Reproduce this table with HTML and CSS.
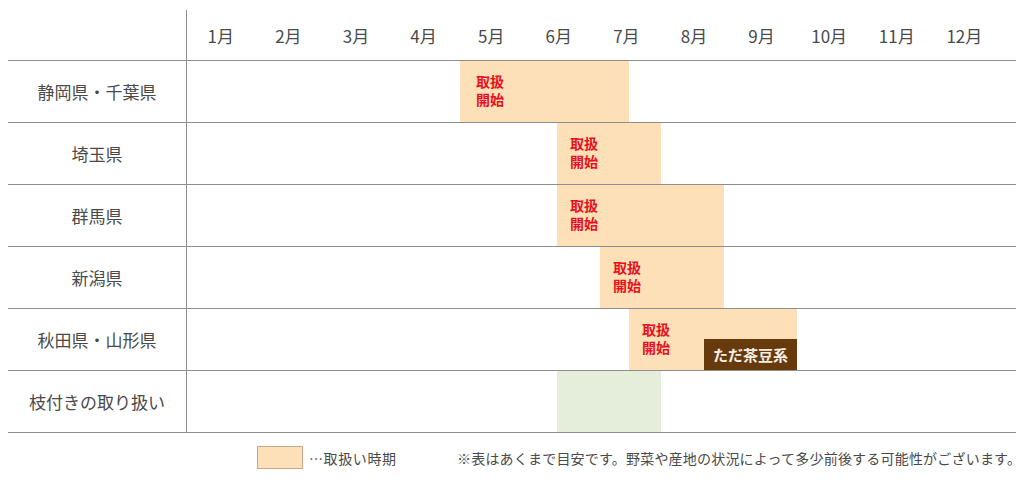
FILE: index.html
```html
<!DOCTYPE html>
<html lang="ja">
<head>
<meta charset="utf-8">
<link rel="stylesheet" href="styles.css">
</head>
<body>
<div class="chart">
  <div class="row head">
    <div class="label"></div>
    <div class="months">
      <span>1月</span><span>2月</span><span>3月</span><span>4月</span><span>5月</span><span>6月</span>
      <span>7月</span><span>8月</span><span>9月</span><span>10月</span><span>11月</span><span>12月</span>
    </div>
  </div>
  <div class="row">
    <div class="label">静岡県・千葉県</div>
    <div class="track"><div class="bar first" style="margin-left:273px;width:169px">取扱<br>開始</div></div>
  </div>
  <div class="row">
    <div class="label">埼玉県</div>
    <div class="track"><div class="bar" style="margin-left:370px;width:104px">取扱<br>開始</div></div>
  </div>
  <div class="row">
    <div class="label">群馬県</div>
    <div class="track"><div class="bar" style="margin-left:370px;width:167px">取扱<br>開始</div></div>
  </div>
  <div class="row">
    <div class="label">新潟県</div>
    <div class="track"><div class="bar" style="margin-left:413px;width:124px">取扱<br>開始</div></div>
  </div>
  <div class="row">
    <div class="label">秋田県・山形県</div>
    <div class="track"><div class="bar" style="margin-left:442px;width:168px">取扱<br>開始<span class="badge">ただ茶豆系</span></div></div>
  </div>
  <div class="row last">
    <div class="label">枝付きの取り扱い</div>
    <div class="track"><div class="bar green" style="margin-left:370px;width:104px"></div></div>
  </div>
</div>
<div class="legend">
  <span class="swatch"></span>
  <span class="legend-text">…取扱い時期</span>
  <span class="note">※表はあくまで目安です。野菜や産地の状況によって多少前後する可能性がございます。</span>
</div>
</body>
</html>
```
FILE: styles.css
```css
html, body {
  margin: 0;
  padding: 0;
  background: #ffffff;
}
body {
  width: 1024px;
  height: 486px;
  overflow: hidden;
  font-family: "Noto Sans CJK JP", "Noto Sans", sans-serif;
  font-weight: 400;
  color: #4a4a4a;
}
.chart {
  margin-left: 8px;
  width: 1008px;
  padding-top: 10px;
}
.row {
  display: flex;
  height: 61px;
  border-top: 1px solid #8e8e8e;
}
.row.head {
  height: 50px;
  border-top: none;
}
.row.last {
  border-bottom: 1px solid #8e8e8e;
}
.label {
  width: 178px;
  flex: none;
  border-right: 1px solid #8e8e8e;
  display: flex;
  align-items: center;
  justify-content: center;
  font-size: 17px;
  white-space: nowrap;
}
.months {
  display: grid;
  grid-template-columns: repeat(12, 67.6px);
  align-items: center;
  font-size: 17px;
}
.months span {
  text-align: center;
}
.track {
  flex: 1;
  display: flex;
}
.bar {
  position: relative;
  flex: none;
  height: 61px;
  box-sizing: border-box;
  background: #fde0b7;
  color: #e8101e;
  font-weight: 700;
  font-size: 14px;
  line-height: 18px;
  padding: 11px 0 0 13px;
}
.bar.first {
  padding-left: 16px;
}
.bar.green {
  background: #e4eedb;
}
.badge {
  position: absolute;
  right: 0;
  bottom: 0;
  width: 93px;
  height: 31px;
  background: #673a0e;
  color: #f6efe4;
  font-size: 15px;
  font-weight: 700;
  line-height: 31px;
  text-align: center;
}
.legend {
  display: flex;
  align-items: center;
  margin-top: 13px;
  padding-left: 257px;
  height: 23px;
  font-size: 14px;
}
.swatch {
  width: 44px;
  height: 21px;
  background: #fde0b7;
  border: 1px solid #c6a98c;
  flex: none;
}
.legend-text {
  margin-left: 6px;
  width: 148px;
  letter-spacing: 0.6px;
}
.note {
  letter-spacing: 0.2px;
  white-space: nowrap;
}
```
